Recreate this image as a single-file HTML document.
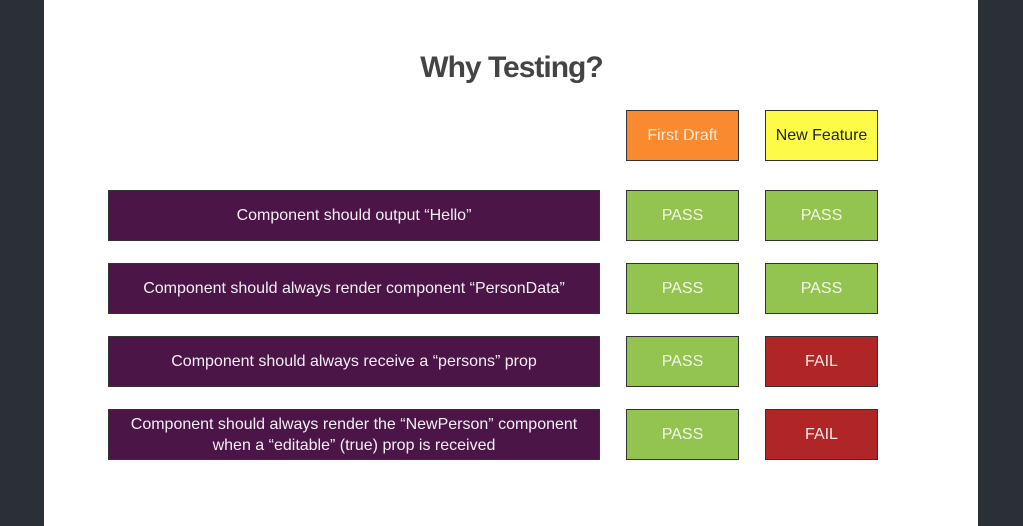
<!DOCTYPE html>
<html><head><style>
html,body{margin:0;padding:0;}
body{width:1023px;height:526px;background:#2b2f36;position:relative;overflow:hidden;font-family:"Liberation Sans",sans-serif;}
.slide{position:absolute;left:44px;top:0;width:934px;height:526px;background:#fff;}
h1{position:absolute;left:0;width:100%;top:51px;margin:0;text-align:center;font-size:30px;font-weight:bold;color:#444;letter-spacing:-1px;}
.b{position:absolute;box-sizing:border-box;border:1px solid #333;display:flex;align-items:center;justify-content:center;text-align:center;font-size:16px;color:#f4eef4;line-height:21px;}
.p{left:108px;width:492px;height:51px;background:#4b1548;}
.c1{left:626px;width:113px;height:51px;}
.c2{left:765px;width:113px;height:51px;}
.g{background:#93c44f;color:#f2f8ea;}
.r{background:#b02626;color:#f8e8e8;}
</style></head><body>
<div class="slide"></div>
<h1>Why Testing?</h1>
<div class="b c1" style="top:110px;background:#f98a2f;color:#fde8d6">First Draft</div>
<div class="b c2" style="top:110px;background:#fdfb48;color:#222">New Feature</div>

<div class="b p" style="top:190px">Component should output “Hello”</div>
<div class="b c1 g" style="top:190px">PASS</div>
<div class="b c2 g" style="top:190px">PASS</div>

<div class="b p" style="top:263px">Component should always render component “PersonData”</div>
<div class="b c1 g" style="top:263px">PASS</div>
<div class="b c2 g" style="top:263px">PASS</div>

<div class="b p" style="top:336px">Component should always receive a “persons” prop</div>
<div class="b c1 g" style="top:336px">PASS</div>
<div class="b c2 r" style="top:336px">FAIL</div>

<div class="b p" style="top:409px">Component should always render the “NewPerson” component<br>when a “editable” (true) prop is received</div>
<div class="b c1 g" style="top:409px">PASS</div>
<div class="b c2 r" style="top:409px">FAIL</div>
</body></html>
